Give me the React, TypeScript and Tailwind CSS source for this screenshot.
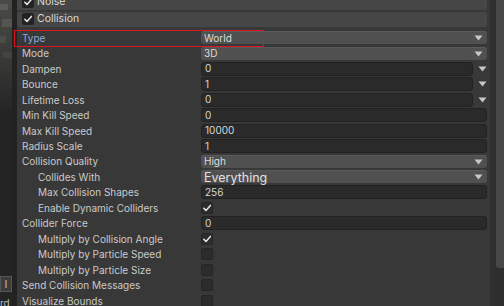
import React from 'react'

type Kind = 'dropdown' | 'curve' | 'number' | 'check' | 'big'

type Row = {
  label: string
  kind: Kind
  value?: string
  indent?: boolean
  checked?: boolean
  highlight?: boolean
}

const rows: Row[] = [
  { label: 'Type', kind: 'dropdown', value: 'World', highlight: true },
  { label: 'Mode', kind: 'dropdown', value: '3D' },
  { label: 'Dampen', kind: 'curve', value: '0' },
  { label: 'Bounce', kind: 'curve', value: '1' },
  { label: 'Lifetime Loss', kind: 'curve', value: '0' },
  { label: 'Min Kill Speed', kind: 'number', value: '0' },
  { label: 'Max Kill Speed', kind: 'number', value: '10000' },
  { label: 'Radius Scale', kind: 'number', value: '1' },
  { label: 'Collision Quality', kind: 'dropdown', value: 'High' },
  { label: 'Collides With', kind: 'big', value: 'Everything', indent: true },
  { label: 'Max Collision Shapes', kind: 'number', value: '256', indent: true },
  { label: 'Enable Dynamic Colliders', kind: 'check', checked: true, indent: true },
  { label: 'Collider Force', kind: 'number', value: '0' },
  { label: 'Multiply by Collision Angle', kind: 'check', checked: true, indent: true },
  { label: 'Multiply by Particle Speed', kind: 'check', indent: true },
  { label: 'Multiply by Particle Size', kind: 'check', indent: true },
  { label: 'Send Collision Messages', kind: 'check' },
  { label: 'Visualize Bounds', kind: 'check' },
]

const Arrow = () => (
  <svg width="9" height="6" viewBox="0 0 9 6" className="shrink-0">
    <path d="M0.5 0.5 H8.5 L4.5 5.5 Z" fill="#c8c8c8" />
  </svg>
)

const Check = ({ size = 10 }: { size?: number }) => (
  <svg width={size} height={size} viewBox="0 0 10 10">
    <path d="M1.8 5.2 L4 7.4 L8.4 2.4" fill="none" stroke="#e6e6e6" strokeWidth="1.5" strokeLinecap="round" strokeLinejoin="round" />
  </svg>
)

const Field = ({ row }: { row: Row }) => {
  if (row.kind === 'dropdown' || row.kind === 'big') {
    return (
      <div className="flex-1 h-[13px] rounded-[3px] bg-[#505050] border-t border-[#5a5a5a] flex items-center pl-[3px] pr-[4px]">
        <span className={`flex-1 ${row.kind === 'big' ? 'text-[12.5px] leading-[13px] text-[#e2e2e2]' : 'text-[10px] leading-[13px] text-[#dcdcdc]'}`}>{row.value}</span>
        <Arrow />
      </div>
    )
  }
  if (row.kind === 'curve') {
    return (
      <div className="flex-1 flex items-center gap-[4px]">
        <div className="flex-1 h-[14px] rounded-[3px] bg-[#2a2a2a] border border-[#222] flex items-center pl-[3px]">
          <span className="text-[10px] leading-[13px] text-[#d6d6d6]">{row.value}</span>
        </div>
        <div className="w-[10px] flex justify-center">
          <Arrow />
        </div>
      </div>
    )
  }
  if (row.kind === 'number') {
    return (
      <div className="flex-1 h-[14px] rounded-[3px] bg-[#2a2a2a] border border-[#222] flex items-center pl-[3px]">
        <span className="text-[10px] leading-[13px] text-[#d6d6d6]">{row.value}</span>
      </div>
    )
  }
  return (
    <div className="w-[12px] h-[12px] rounded-[2px] bg-[#2c2c2c] border border-[#252525] flex items-center justify-center">
      {row.checked && <Check size={10} />}
    </div>
  )
}

const Header = ({ label }: { label: string }) => (
  <div className="h-[15.5px] bg-[#464646] rounded-[2px] flex items-center pl-[5px] gap-[3px] shrink-0">
    <div className="w-[12px] h-[12px] rounded-[2px] bg-[#222] flex items-center justify-center">
      <Check size={10} />
    </div>
    <span className="text-[10.5px] leading-none text-[#d8d8d8]">{label}</span>
  </div>
)

export default function App() {
  return (
    <div className="w-[504px] h-[306px] overflow-hidden flex bg-[#383838]" style={{ fontFamily: 'Inter, "Noto Sans", sans-serif' }}>
      {/* scene view edge */}
      <div className="w-[12px] h-full flex flex-col bg-[#242424] shrink-0">
        <div className="h-[110px] bg-gradient-to-b from-[#4a4a46] via-[#3a3a38] to-[#262626] flex flex-col gap-[9px] pt-[4px]">
          <div className="h-[6px] w-[8px] bg-[#5c5c58]" />
          <div className="h-[8px] w-[10px] ml-[2px] bg-[#555551]" />
          <div className="h-[7px] w-[6px] bg-[#4c4c49]" />
          <div className="h-[6px] w-[9px] ml-[3px] bg-[#434341]" />
        </div>
        <div className="flex-1" />
        <div className="h-[16px] mb-[6px] bg-[#3c3c3c] border border-[#555] flex items-center justify-center text-[10px] text-[#ccc]">l</div>
        <div className="h-[8px] text-[10px] leading-none text-[#bbb]">rd</div>
      </div>
      <div className="w-[5px] h-full bg-[#222] shrink-0" />

      {/* inspector */}
      <div className="flex-1 flex flex-col relative -mt-[6px] pr-[3px]">
        <Header label="Noise" />
        <div className="h-[2px] shrink-0" />
        <Header label="Collision" />
        <div className="h-[3px] shrink-0" />
        {rows.map((row) => (
          <div key={row.label} className="h-[15.47px] flex items-center shrink-0">
            <span
              className={`w-[184px] shrink-0 text-[10px] leading-none ${row.indent ? 'pl-[21px]' : 'pl-[5px]'} ${row.highlight ? 'text-[#8ea7d9]' : 'text-[#cacaca]'}`}
            >
              {row.label}
            </span>
            <Field row={row} />
          </div>
        ))}
        {/* selection outline */}
        <div className="absolute left-[-3px] top-[36px] w-[250px] h-[17px] border border-[#e0141e] pointer-events-none" />
      </div>

      {/* scrollbar */}
      <div className="w-[6px] h-full bg-[#2f2f2f] shrink-0" />
      <div className="w-[8px] h-full bg-[#2e2e2e] shrink-0 flex flex-col">
        <div className="h-[268px] bg-[#474747] rounded-bl-[3px]" />
      </div>
    </div>
  )
}
